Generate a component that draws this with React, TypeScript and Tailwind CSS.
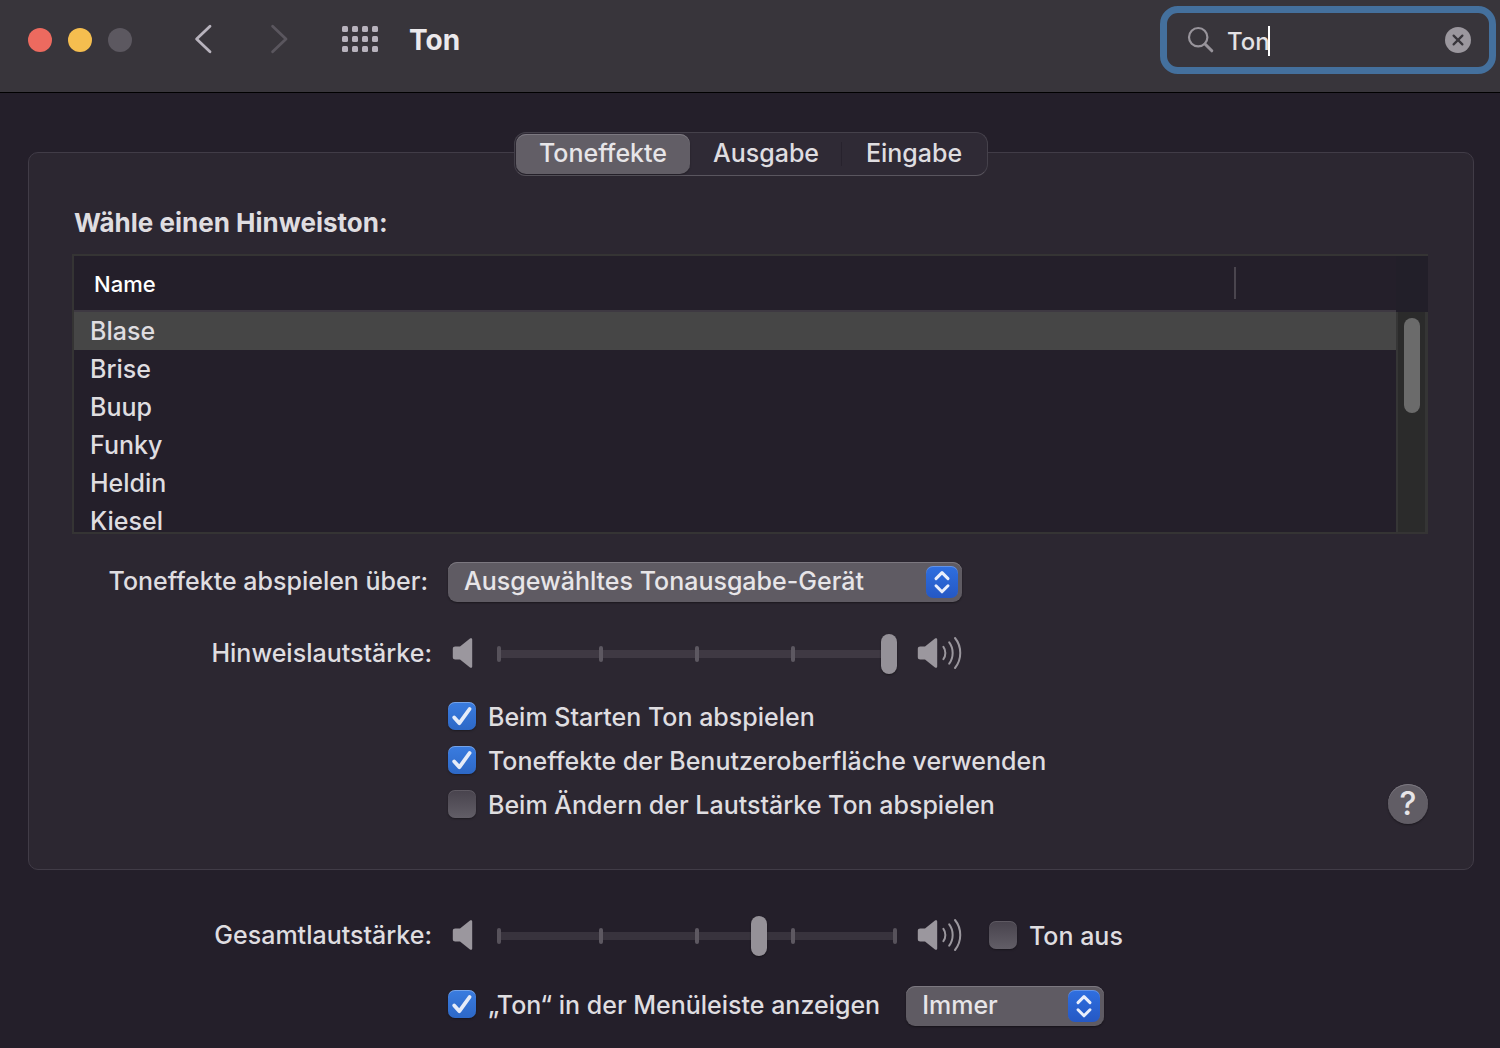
import { useState } from 'react';
import type { ReactNode } from 'react';

function Speaker({ className }: { className?: string }) {
  return (
    <svg className={className} width="22" height="32" viewBox="0 0 22 32" fill="#9b979e" aria-hidden="true">
      <path d="M3.2 9.5H8L18 1.6C19 .8 20.2 1.2 20.2 2.5V29.5C20.2 30.8 19 31.2 18 30.4L8 22.5H3.2C1.8 22.5 .8 21.7 .8 20.3V11.7C.8 10.3 1.8 9.5 3.2 9.5Z" />
    </svg>
  );
}

function SpeakerLoud() {
  return (
    <svg width="46" height="34" viewBox="0 0 46 34" fill="none" aria-hidden="true">
      <path
        d="M3.2 10.5H8L18 2.6C19 1.8 20.2 2.2 20.2 3.5V30.5C20.2 31.8 19 32.2 18 31.4L8 23.5H3.2C1.8 23.5 .8 22.7 .8 21.3V12.7C.8 11.3 1.8 10.5 3.2 10.5Z"
        fill="#9b979e"
      />
      <g stroke="#9b979e" strokeWidth="2" strokeLinecap="round">
        <path d="M26.4 10.8C29 14.2 29 19.8 26.4 23.2" />
        <path d="M32.2 6.4C36.8 12.4 36.8 21.6 32.2 27.6" />
        <path d="M38 2C45 10.6 45 23.4 38 32" />
      </g>
    </svg>
  );
}

function VolumeSlider({ id, value, dim }: { id: string; value: number; dim?: boolean }) {
  const [level, setLevel] = useState(value);
  return (
    <div className="flex items-center pl-1">
      <Speaker className="mr-[23px] shrink-0" />
      <div className="grid w-[400px] items-center">
        <div className={`col-start-1 row-start-1 mx-0.5 mt-0.5 h-2 ${dim ? 'bg-[#38333d]' : 'bg-[#3f3943]'}`} />
        <div className="col-start-1 row-start-1 mt-0.5 flex justify-between">
          <i className="mr-1.5 h-4 w-1 rounded-full bg-[#57525b]" />
          <i className="h-4 w-1 rounded-full bg-[#5d5861]" />
          <i className="h-4 w-1 rounded-full bg-[#5d5861]" />
          <i className="h-4 w-1 rounded-full bg-[#5d5861]" />
          <i className="ml-1.5 h-4 w-1 rounded-full bg-[#57525b]" />
        </div>
        <input
          id={id}
          type="range"
          min={0}
          max={384}
          value={level}
          onChange={(e) => setLevel(Number(e.target.value))}
          className="col-start-1 row-start-1 mt-0.5 h-10 w-full appearance-none bg-transparent outline-none [&::-webkit-slider-thumb]:h-10 [&::-webkit-slider-thumb]:w-4 [&::-webkit-slider-thumb]:appearance-none [&::-webkit-slider-thumb]:rounded-full [&::-webkit-slider-thumb]:bg-[#959198] [&::-webkit-slider-thumb]:shadow-[0_1px_2px_rgba(0,0,0,0.4)]"
        />
      </div>
      <div className="ml-5">
        <SpeakerLoud />
      </div>
    </div>
  );
}

function Check({ label, initial }: { label: string; initial?: boolean }) {
  const [on, setOn] = useState(!!initial);
  return (
    <label className="flex h-7 items-center gap-3">
      <span className="grid shrink-0">
        <input
          type="checkbox"
          checked={on}
          onChange={(e) => setOn(e.target.checked)}
          className="col-start-1 row-start-1 size-7 appearance-none rounded-[7px] bg-linear-to-b from-[#48434d] to-[#625e67] shadow-[0_1px_2px_rgba(0,0,0,0.35),inset_0_1px_0_rgba(255,255,255,0.12)] checked:from-[#3a7ce0] checked:to-[#2d68c6] checked:shadow-[0_1px_2px_rgba(0,0,0,0.35),inset_0_1px_0_rgba(255,255,255,0.3)]"
        />
        {on && (
          <svg className="pointer-events-none col-start-1 row-start-1" width="28" height="28" viewBox="0 0 28 28" fill="none" aria-hidden="true">
            <path d="M6.2 15.4L11.4 21.2L21.6 7" stroke="#e6ecf8" strokeWidth="3.8" strokeLinecap="round" strokeLinejoin="round" />
          </svg>
        )}
      </span>
      <span className="pt-0.5 leading-7">{label}</span>
    </label>
  );
}

function PopUp({ id, label, options, width }: { id: string; label?: string; options: string[]; width: string }) {
  return (
    <div className={`grid items-center ${width}`}>
      <select
        id={id}
        aria-label={label}
        className="col-start-1 row-start-1 h-10 w-full appearance-none rounded-[9px] bg-[#5f5b63] pr-12 pl-4 text-[#e7e5e8] shadow-[0_1px_2px_rgba(0,0,0,0.4),inset_0_1px_0_#7c7880] outline-none"
      >
        {options.map((o) => (
          <option key={o}>{o}</option>
        ))}
      </select>
      <span className="pointer-events-none col-start-1 row-start-1 mr-1 grid h-8 w-8 place-items-center justify-self-end rounded-[7px] bg-linear-to-b from-[#2f6fe0] to-[#2558c4] shadow-[inset_0_1px_0_rgba(255,255,255,0.25)]">
        <svg width="32" height="32" viewBox="0 0 32 32" fill="none" stroke="#e9eefb" strokeWidth="3" strokeLinecap="round" strokeLinejoin="round" aria-hidden="true">
          <path d="M10 12.6L16 6.6L22 12.6M10 19.8L16 25.8L22 19.8" />
        </svg>
      </span>
    </div>
  );
}

function RowLabel({ htmlFor, children }: { htmlFor: string; children: ReactNode }) {
  return (
    <label htmlFor={htmlFor} className="justify-self-end leading-8 whitespace-nowrap">
      {children}
    </label>
  );
}

function Header() {
  const [query, setQuery] = useState('Ton');
  return (
    <header className="flex h-[93px] items-start border-b border-black bg-[#38353b] pl-7">
      <div className="flex gap-4 pt-7">
        <button aria-label="Schließen" className="size-6 rounded-full bg-[#ed6a5f]" />
        <button aria-label="Minimieren" className="size-6 rounded-full bg-[#f5be4f]" />
        <button aria-label="Vergrößern" className="size-6 rounded-full bg-[#5c5860]" />
      </div>
      <button aria-label="Zurück" className="mt-6 ml-[61px]">
        <svg width="22" height="30" viewBox="0 0 22 30" fill="none" stroke="#b8b3bd" strokeWidth="2.8" strokeLinecap="round" strokeLinejoin="round">
          <path d="M17 2.2L3.6 15L17 27.8" />
        </svg>
      </button>
      <button aria-label="Vorwärts" className="mt-6 ml-[53px]">
        <svg width="22" height="30" viewBox="0 0 22 30" fill="none" stroke="#5a565e" strokeWidth="2.8" strokeLinecap="round" strokeLinejoin="round">
          <path d="M4.6 2.2L18 15L4.6 27.8" />
        </svg>
      </button>
      <button aria-label="Alle einblenden" className="mt-[26px] ml-[52px]">
        <svg width="36" height="26" viewBox="0 0 36 26" fill="#b8b3bd">
          {[0, 10, 20, 30].map((x) => [0, 10, 20].map((y) => <rect key={`${x}-${y}`} x={x} y={y} width="6" height="6" rx="1.5" />))}
        </svg>
      </button>
      <h1 className="mt-5 ml-[31px] text-[28px] leading-10 font-bold text-[#ebe9ec]">Ton</h1>
      <div className="mt-[6px] mr-1 ml-auto flex h-[68px] w-[336px] items-center rounded-[18px] border-[7px] border-[#44709d] pr-[18px] pl-5">
        <svg width="28" height="28" viewBox="0 0 28 28" fill="none" stroke="#98949b" strokeWidth="2.2" strokeLinecap="round" aria-hidden="true">
          <circle cx="11.2" cy="11.2" r="9.2" />
          <path d="M18 18L24.8 24.8" strokeWidth="3" />
        </svg>
        <input
          aria-label="Suchen"
          value={query}
          onChange={(e) => setQuery(e.target.value)}
          className="ml-3 field-sizing-content max-w-[190px] bg-transparent pt-1 text-[24px] text-[#e3e1e4] caret-transparent outline-none"
        />
        <span className="-ml-0.5 mt-0.5 h-[30px] w-0.5 bg-white" />
        <button aria-label="Suche löschen" className="ml-auto">
          <svg width="26" height="26" viewBox="0 0 26 26">
            <circle cx="13" cy="13" r="13" fill="#9b979e" />
            <path d="M8.6 8.6L17.4 17.4M17.4 8.6L8.6 17.4" stroke="#38353b" strokeWidth="2.2" strokeLinecap="round" />
          </svg>
        </button>
      </div>
    </header>
  );
}

const sounds = ['Blase', 'Brise', 'Buup', 'Funky', 'Heldin', 'Kiesel'];

function SoundList() {
  const [selected, setSelected] = useState('Blase');
  return (
    <div className="mt-[15px] flex h-[280px] border-y-2 border-l-2 border-[#353434] bg-[#241f2a]">
      <div className="min-w-0 flex-1 overflow-hidden">
        <table className="w-full border-separate border-spacing-0 text-left">
          <thead>
            <tr className="h-14">
              <th scope="col" className="border-b-2 border-[#3e3942] pt-0.5 pl-5 text-[22px] font-medium text-white">
                Name
              </th>
              <th scope="col" aria-label="Typ" className="w-[162px] border-b-2 border-[#3e3942]">
                <span className="block h-8 w-0.5 bg-[#4a454e]" />
              </th>
            </tr>
          </thead>
          <tbody>
            {sounds.map((s) => (
              <tr key={s} onClick={() => setSelected(s)} className={s === selected ? 'h-[38px] bg-[#464646]' : 'h-[38px]'}>
                <td colSpan={2} className="pl-4 leading-[38px]">
                  {s}
                </td>
              </tr>
            ))}
          </tbody>
        </table>
      </div>
      <div className="flex w-8 flex-col">
        <div className="h-14 bg-[#221f29]" />
        <div className="flex-1 border-r-[3px] border-l-2 border-r-[#353535] border-l-[#363636] bg-[#2b2b2b] pt-1.5 pl-1.5">
          <div className="h-[95px] w-4 rounded-full bg-[#6b6b6b]" />
        </div>
      </div>
    </div>
  );
}

export default function App() {
  const tabs = [
    { name: 'Toneffekte', width: 'w-[174px]' },
    { name: 'Ausgabe', width: 'w-[152px]' },
    { name: 'Eingabe', width: 'w-[144px]' },
  ];
  const [tab, setTab] = useState('Toneffekte');

  return (
    <div className="min-h-screen bg-[#241f2a] font-['Inter',sans-serif] text-[25px] font-medium text-[#dfdde0]">
      <Header />
      <main className="flex flex-col pt-[39px] pr-[26px] pb-5 pl-7">
        <div role="tablist" className="z-10 -mb-6 flex h-11 items-center self-center rounded-[12px] border border-[#45414b] border-b-[#5a565f] bg-[#2f2a35] p-px">
          {tabs.map((t, i) => (
            <div key={t.name} className="flex h-10 items-center">
              {i === 2 && <span className="-ml-px h-6 w-px bg-[#27222d]" />}
              <button
                role="tab"
                aria-selected={t.name === tab}
                onClick={() => setTab(t.name)}
                className={`${t.width} h-10 rounded-[10px] ${t.name === tab ? 'bg-[#625e66] text-[#e7e5e8] shadow-[0_1px_2px_rgba(0,0,0,0.3),inset_0_1px_0_#7c7880]' : ''}`}
              >
                {t.name}
              </button>
            </div>
          ))}
        </div>

        <section className="rounded-[10px] border border-[#413c47] bg-[#2c2731] pt-[54px] pr-[45px] pb-[45px] pl-[43px]">
          <h2 className="ml-0.5 text-[26px] leading-8 font-bold">Wähle einen Hinweiston:</h2>
          <SoundList />
          <div className="mt-7 grid grid-cols-[360px_1fr] items-center gap-x-4">
            <div className="justify-self-end pr-1">
              <RowLabel htmlFor="output">Toneffekte abspielen über:</RowLabel>
            </div>
            <PopUp id="output" options={['Ausgewähltes Tonausgabe-Gerät', 'Interne Lautsprecher']} width="w-[514px]" />
          </div>
          <div className="mt-[30px] grid grid-cols-[360px_1fr] items-center gap-x-4">
            <RowLabel htmlFor="alert-volume">Hinweislautstärke:</RowLabel>
            <VolumeSlider id="alert-volume" value={384} />
          </div>
          <div className="mt-7 flex items-end justify-between pl-[376px]">
            <div className="flex flex-col gap-4 pb-1.5">
              <Check label="Beim Starten Ton abspielen" initial />
              <Check label="Toneffekte der Benutzeroberfläche verwenden" initial />
              <Check label="Beim Ändern der Lautstärke Ton abspielen" />
            </div>
            <button
              aria-label="Hilfe"
              className="size-10 rounded-full bg-[#615d65] text-[32px] leading-10 font-medium text-[#e7e5e8] shadow-[0_1px_2px_rgba(0,0,0,0.4),inset_0_1px_0_#7c7880]"
            >
              ?
            </button>
          </div>
        </section>

        <section className="mt-11 pl-11">
          <div className="grid grid-cols-[360px_1fr] items-center gap-x-4">
            <RowLabel htmlFor="main-volume">Gesamtlautstärke:</RowLabel>
            <div className="flex items-center gap-[26px]">
              <VolumeSlider id="main-volume" value={254} dim />
              <Check label="Ton aus" />
            </div>
          </div>
          <div className="mt-[30px] flex items-start gap-[26px] pl-[376px]">
            <div className="pt-1">
              <Check label="„Ton“ in der Menüleiste anzeigen" initial />
            </div>
            <PopUp id="menu-bar" label="Anzeigen" options={['Immer', 'Wenn aktiv']} width="w-[198px]" />
          </div>
        </section>
      </main>
    </div>
  );
}
